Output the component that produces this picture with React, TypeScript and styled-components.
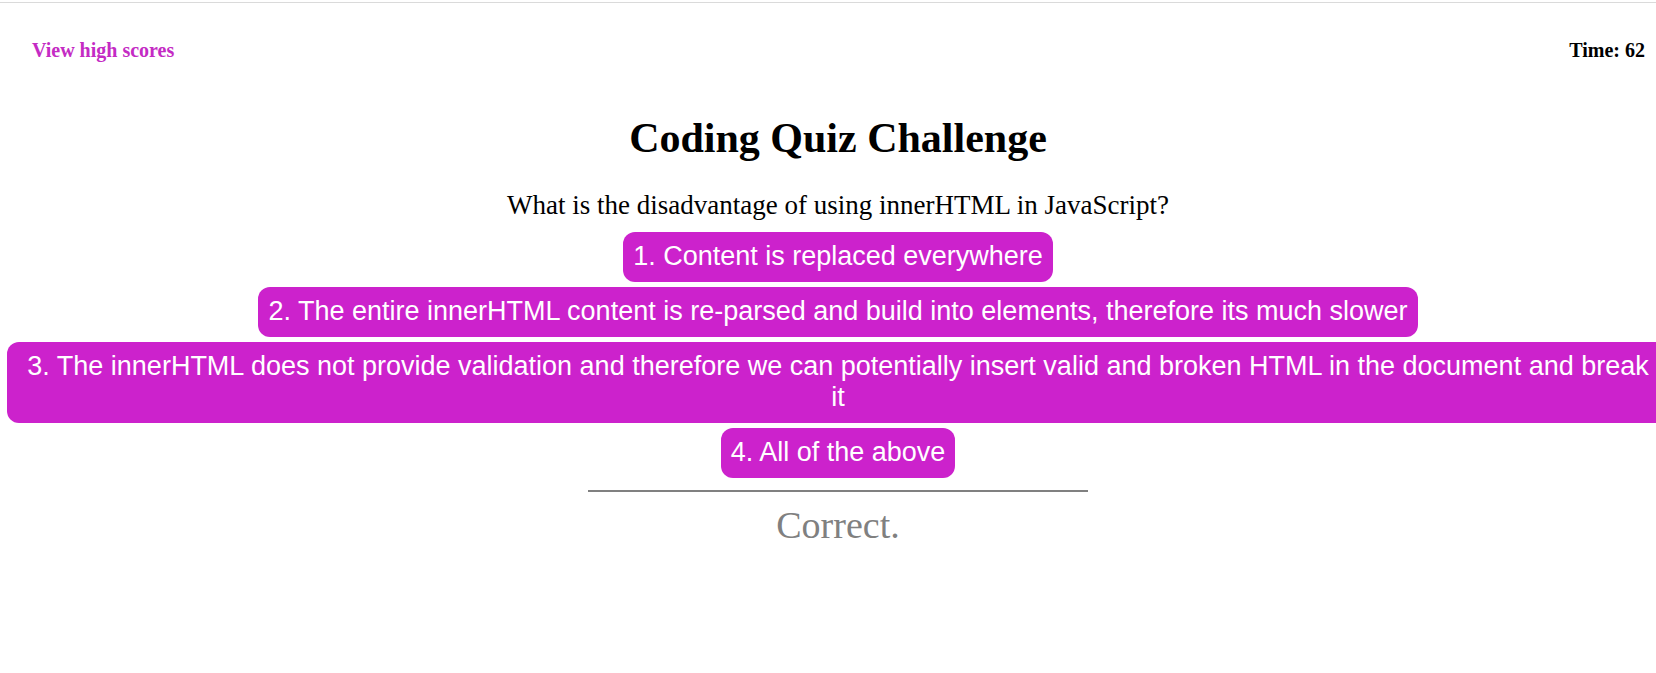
import React from "react";
import styled, { createGlobalStyle } from "styled-components";

const Global = createGlobalStyle`
  html, body {
    margin: 0;
    padding: 0;
    background: #ffffff;
    overflow: hidden;
  }
  body {
    font-family: "Liberation Serif", "Times New Roman", serif;
    color: #000000;
  }
`;

const Page = styled.div`
  width: 1656px;
  height: 673px;
  overflow: hidden;
  padding-top: 2px;
  box-sizing: border-box;
`;

const TopRule = styled.div`
  height: 0;
  border-top: 1px solid #dadada;
`;

const Shell = styled.div`
  width: 1662px;
  margin-left: 7px;
  display: flex;
  flex-direction: column;
`;

const Header = styled.header`
  display: flex;
  justify-content: space-between;
  align-items: flex-start;
  padding: 35.5px 24px 0 25px;
  font-size: 20px;
  line-height: 22px;
  font-weight: bold;
`;

const HighScores = styled.a`
  color: #c42bc4;
  text-decoration: none;
  cursor: pointer;
`;

const Timer = styled.span`
  color: #000000;
`;

const Main = styled.main`
  display: flex;
  flex-direction: column;
  align-items: center;
  text-align: center;
`;

const Title = styled.h1`
  margin: 53.5px 0 0;
  font-size: 42px;
  line-height: 48px;
  font-weight: bold;
`;

const Question = styled.p`
  margin: 27.7px 0 0;
  font-size: 27px;
  line-height: 30px;
  font-weight: normal;
`;

const Choices = styled.div`
  display: flex;
  flex-direction: column;
  align-items: center;
  gap: 5px;
  margin-top: 12px;
  width: 100%;
`;

const Choice = styled.button`
  font-family: "Liberation Sans", Arial, sans-serif;
  font-size: 27px;
  line-height: 31px;
  color: #ffffff;
  background: #cc22cc;
  border: none;
  border-radius: 12px;
  padding: 9.5px 10px;
  max-width: 100%;
  box-sizing: border-box;
  cursor: pointer;
`;

const Divider = styled.hr`
  width: 500px;
  margin: 12px 0 0;
  border: none;
  border-top: 2px solid #808080;
  height: 0;
`;

const Feedback = styled.p`
  margin: 11.8px 0 0;
  font-size: 38px;
  line-height: 44px;
  color: #808080;
`;

const choices = [
  "1. Content is replaced everywhere",
  "2. The entire innerHTML content is re-parsed and build into elements, therefore its much slower",
  "3. The innerHTML does not provide validation and therefore we can potentially insert valid and broken HTML in the document and break it",
  "4. All of the above",
];

export default function App() {
  return (
    <>
      <Global />
      <Page>
        <TopRule />
        <Shell>
          <Header>
            <HighScores>View high scores</HighScores>
            <Timer>Time: 62</Timer>
          </Header>
          <Main>
            <Title>Coding Quiz Challenge</Title>
            <Question>What is the disadvantage of using innerHTML in JavaScript?</Question>
            <Choices>
              {choices.map((c) => (
                <Choice key={c}>{c}</Choice>
              ))}
            </Choices>
            <Divider />
            <Feedback>Correct.</Feedback>
          </Main>
        </Shell>
      </Page>
    </>
  );
}
